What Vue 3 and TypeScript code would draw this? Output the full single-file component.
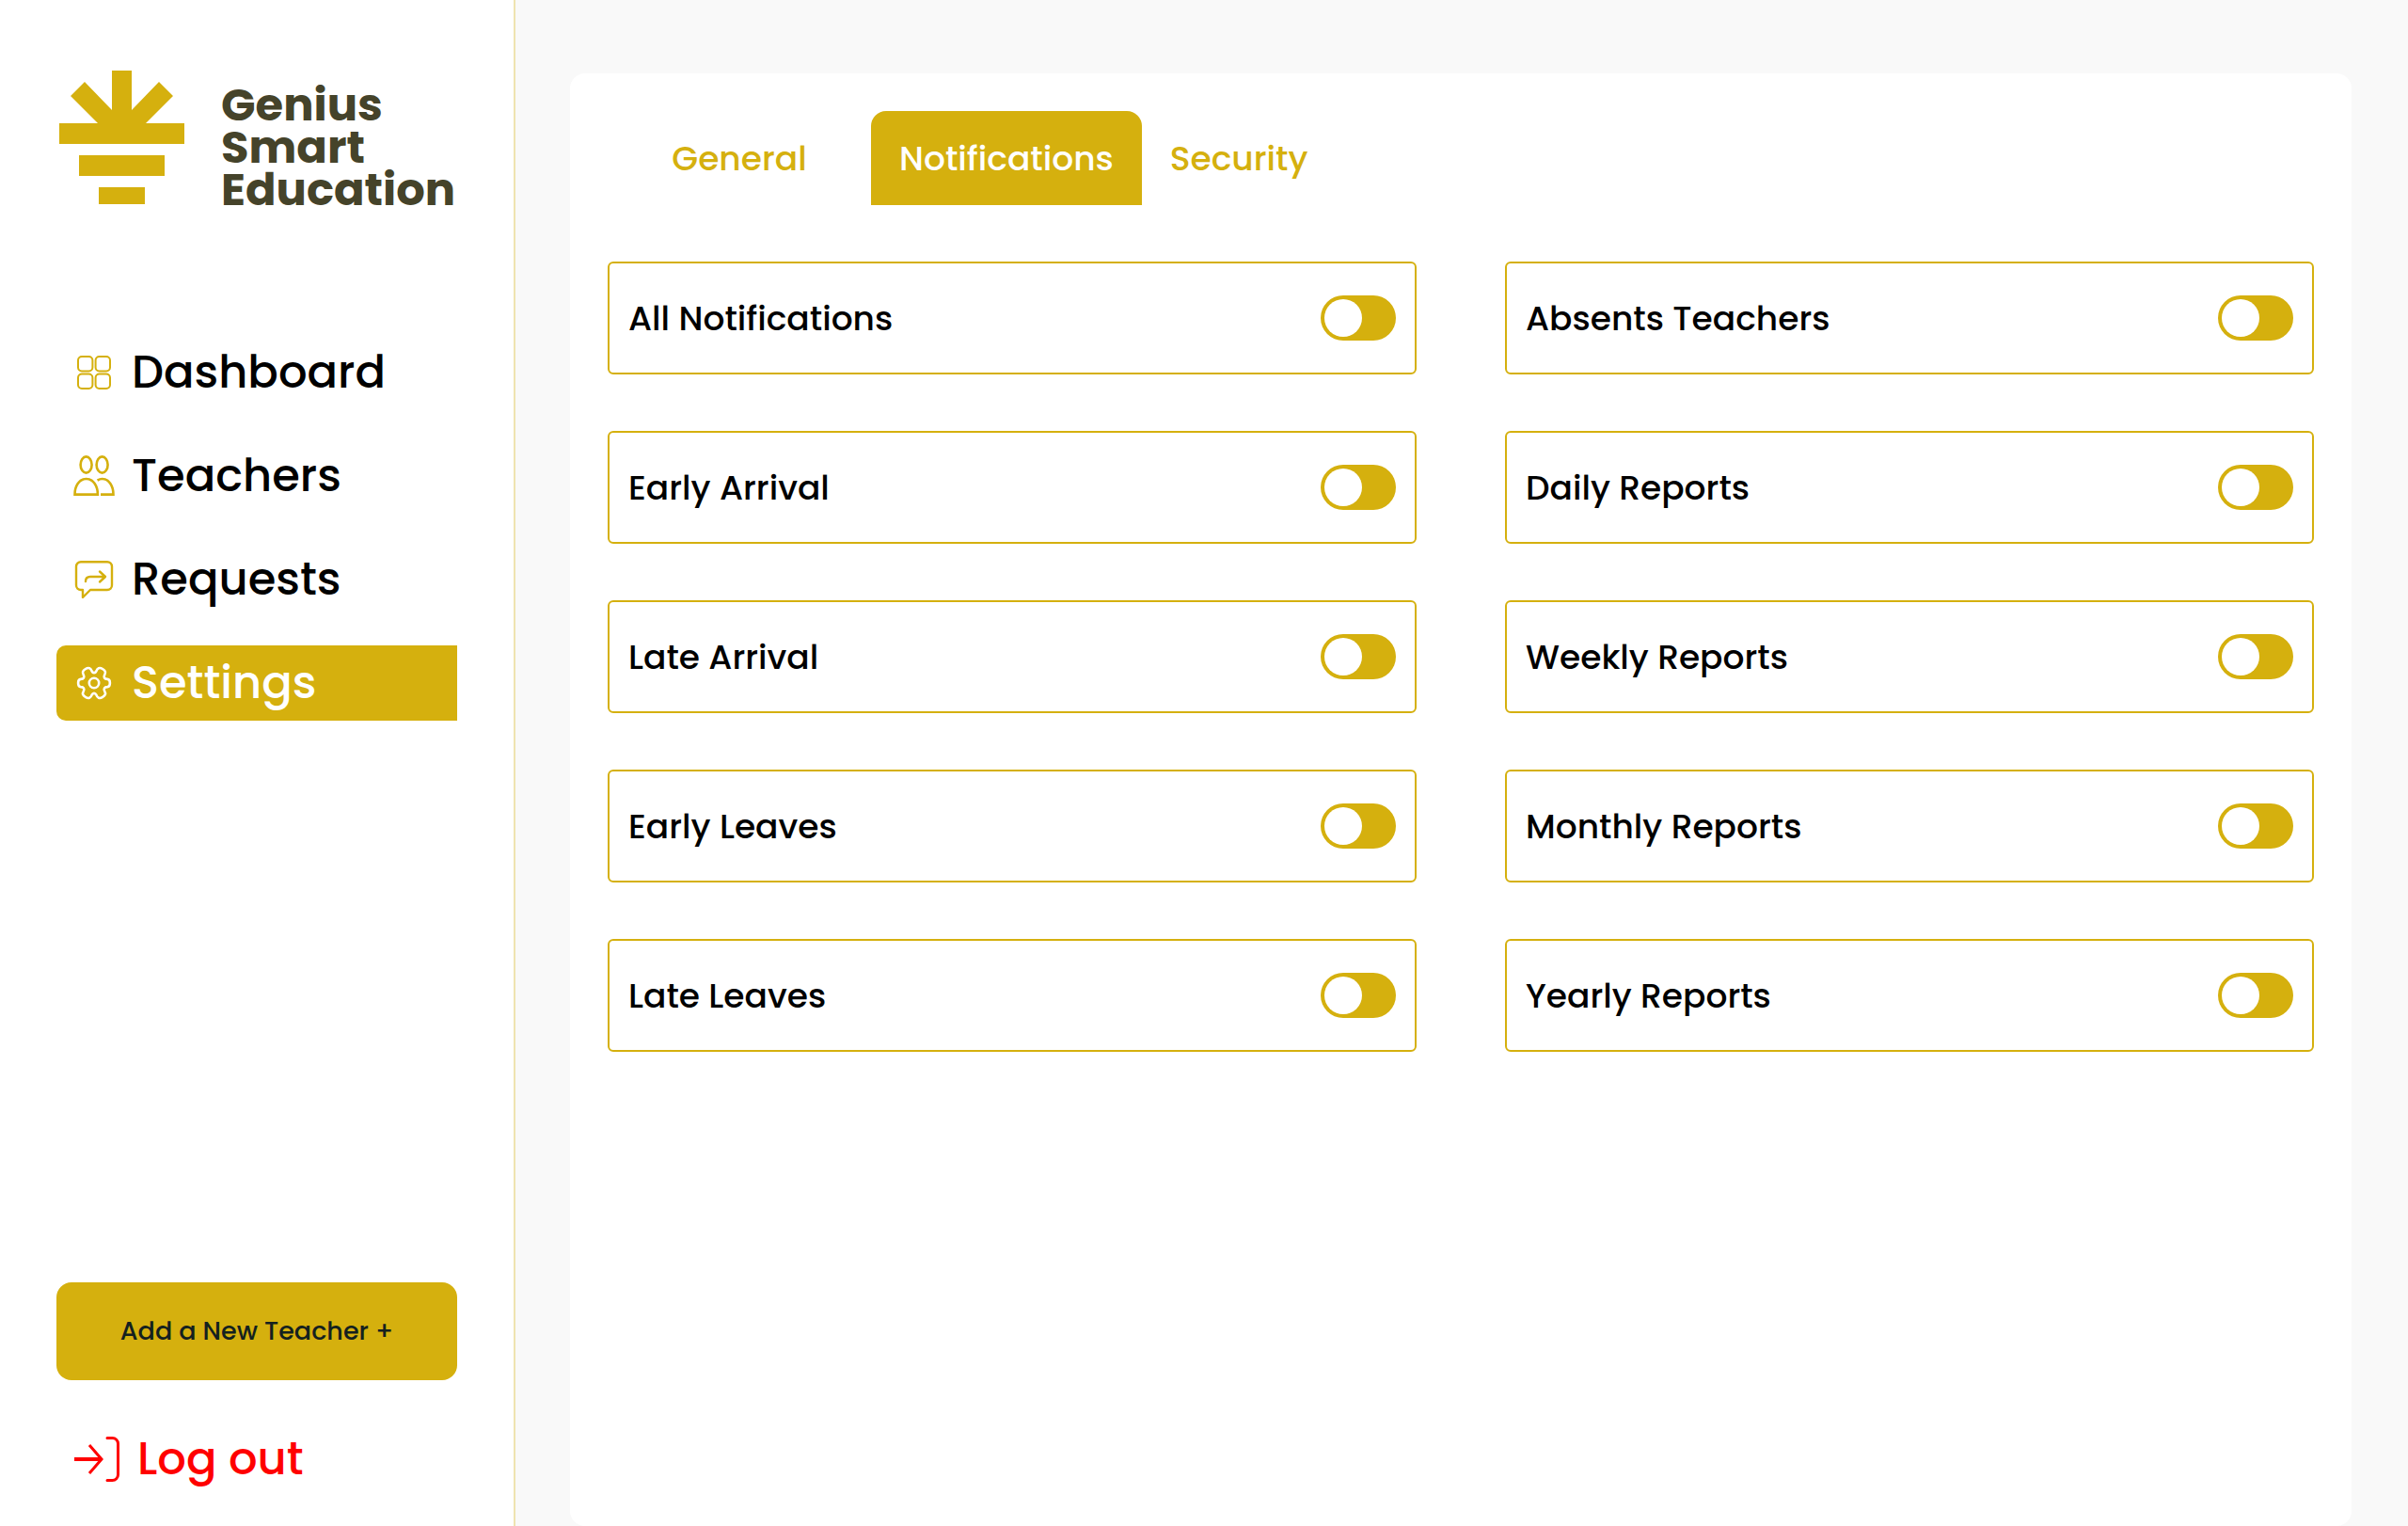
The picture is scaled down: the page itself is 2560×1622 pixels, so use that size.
<script setup lang="ts">
import { ref } from 'vue'

interface Toggle {
  id: string
  label: string
  on: boolean
}

const navItems = ['Dashboard', 'Teachers', 'Requests', 'Settings']
const activeNav = ref('Settings')

const tabs = ['General', 'Notifications', 'Security']
const activeTab = ref('Notifications')

const toggles = ref<Toggle[]>([
  { id: 'all', label: 'All Notifications', on: false },
  { id: 'absents', label: 'Absents Teachers', on: false },
  { id: 'early-arrival', label: 'Early Arrival', on: false },
  { id: 'daily', label: 'Daily Reports', on: false },
  { id: 'late-arrival', label: 'Late Arrival', on: false },
  { id: 'weekly', label: 'Weekly Reports', on: false },
  { id: 'early-leaves', label: 'Early Leaves', on: false },
  { id: 'monthly', label: 'Monthly Reports', on: false },
  { id: 'late-leaves', label: 'Late Leaves', on: false },
  { id: 'yearly', label: 'Yearly Reports', on: false },
])
</script>

<template>
  <div class="layout">
    <aside class="sidebar">
      <div class="brand">
        <svg class="brand-mark" width="134" height="144" viewBox="0 0 134 144" fill="currentColor" aria-hidden="true">
          <path d="M56 0h21v42l29-30 15 15-29 29h41v22H0V56h41L12 27l15-15 29 30z" />
          <path d="M21 90h91v22H21zM42 124h49v18H42z" />
        </svg>
        <div class="brand-name">
          <span>Genius</span>
          <span>Smart</span>
          <span>Education</span>
        </div>
      </div>

      <nav class="nav">
        <a
          v-for="item in navItems"
          :key="item"
          href="#"
          class="nav-link"
          :class="{ active: item === activeNav }"
          @click.prevent="activeNav = item"
        >
          <svg class="nav-icon" viewBox="0 0 44 44" fill="none" stroke="currentColor" aria-hidden="true">
            <g v-if="item === 'Dashboard'" stroke-width="2">
              <rect x="5" y="5" width="15.4" height="15.4" rx="4" />
              <rect x="23.6" y="5" width="15.4" height="15.4" rx="4" />
              <rect x="5" y="23.6" width="15.4" height="15.4" rx="4" />
              <rect x="23.6" y="23.6" width="15.4" height="15.4" rx="4" />
            </g>
            <g v-else-if="item === 'Teachers'" stroke-width="2.6">
              <ellipse cx="13.6" cy="10" rx="6" ry="8.6" />
              <ellipse cx="30.6" cy="10" rx="6" ry="8.6" />
              <path d="M1.5 41.6C1.5 33 6 25 13.7 25s12.2 8 12.2 16.6z" />
              <path d="M25.6 26.6c1.5-1 3.2-1.6 5-1.6C38 25 42.5 33 42.5 41.600H29" />
            </g>
            <g v-else-if="item === 'Requests'" stroke-width="2.4" stroke-linejoin="round" stroke-linecap="round">
              <path d="M8 3.200h28a5 5 0 0 1 5 5V28a5 5 0 0 1-5 5H18l-8 8v-8H8a5 5 0 0 1-5-5V8.200a5 5 0 0 1 5-5z" />
              <path d="M13 24c0-3.500 2-5 5-5h15M28 13.500l6 5.500-6 5.500" />
            </g>
            <g v-else stroke-width="2.6" stroke-linejoin="round">
              <circle cx="22" cy="22" r="5.200" />
              <path d="M19.600 9.300c1.200 2.400 3.600 2.400 4.800 0 1-3.100 3.400-4.200 6.400-2.400 3.200 1.800 4 3.800 2.500 6.300-1.500 2.700-.3 4.600 2.900 4.700 1.800.1 2.700 1.400 2.700 4.100s-.9 4-2.700 4.100c-3.200.1-4.400 2-2.900 4.700 1.500 2.500.7 4.500-2.500 6.300-3 1.800-5.400.7-6.400-2.400-1.200-2.400-3.600-2.400-4.800 0-1 3.100-3.400 4.200-6.400 2.400-3.200-1.800-4-3.800-2.500-6.300 1.500-2.700.3-4.600-2.900-4.700-1.800-.1-2.700-1.400-2.700-4.100s.9-4 2.700-4.100c3.200-.1 4.400-2 2.900-4.700-1.500-2.500-.7-4.500 2.500-6.300 3-1.800 5.400-.7 6.400 2.400z" />
            </g>
          </svg>
          <span>{{ item }}</span>
        </a>
      </nav>

      <div class="sidebar-foot">
        <button type="button" class="add-button">Add a New Teacher +</button>
        <button type="button" class="logout">
          <svg width="50" height="48" viewBox="-1 0 50 48" fill="none" stroke="currentColor" aria-hidden="true">
            <path d="M0 24h29" stroke-width="4" />
            <path d="M16 9l13 15-13 15" stroke-width="3" />
            <path d="M35 1.500h5.500a6 6 0 0 1 6 6v33a6 6 0 0 1-6 6H35" stroke-width="3" stroke-linecap="round" />
          </svg>
          <span>Log out</span>
        </button>
      </div>
    </aside>

    <main class="main">
      <section class="panel">
        <div class="tabs" role="tablist">
          <button
            v-for="tab in tabs"
            :key="tab"
            type="button"
            role="tab"
            class="tab"
            :class="{ active: tab === activeTab, wide: tab === 'General' }"
            :aria-selected="tab === activeTab"
            @click="activeTab = tab"
          >
            {{ tab }}
          </button>
        </div>

        <div class="options">
          <label v-for="toggle in toggles" :key="toggle.id" class="option" :for="toggle.id">
            <span>{{ toggle.label }}</span>
            <input :id="toggle.id" v-model="toggle.on" type="checkbox" class="switch" />
          </label>
        </div>
      </section>
    </main>
  </div>
</template>

<style>
body {
  margin: 0;
  background: #f9f9f9;
}
</style>

<style scoped>
.layout {
  --gold: #d5b00e;
  display: flex;
  min-height: 100vh;
  font-family: Poppins, Inter, sans-serif;
  font-weight: 500;
  color: #000;
}

.layout,
.layout * {
  box-sizing: border-box;
}

button {
  margin: 0;
  border: 0;
  background: none;
  font: inherit;
  cursor: pointer;
}

.sidebar {
  display: flex;
  flex: none;
  flex-direction: column;
  width: 548px;
  padding: 75px 60px 38px;
  border-right: 2px solid #efe3b0;
  background: #fff;
}

.brand {
  display: flex;
  gap: 38px;
  padding-left: 3px;
}

.brand-mark {
  flex: none;
  color: var(--gold);
}

.brand-name {
  display: flex;
  flex-direction: column;
  padding-top: 14px;
  color: #45432a;
  font-size: 48px;
  font-weight: 700;
  line-height: 45px;
}

.nav {
  display: flex;
  flex-direction: column;
  gap: 30px;
  margin-top: 132px;
}

.nav-link {
  display: flex;
  align-items: center;
  gap: 18px;
  height: 80px;
  padding-left: 18px;
  border-radius: 10px 0 0 10px;
  color: #000;
  font-size: 48px;
  text-decoration: none;
}

.nav-icon {
  flex: none;
  width: 44px;
  height: 44px;
  color: var(--gold);
}

.nav-link.active {
  background: var(--gold);
  color: #fff;
}

.nav-link.active .nav-icon {
  color: #fff;
}

.sidebar-foot {
  display: flex;
  flex-direction: column;
  gap: 50px;
  margin-top: auto;
}

.add-button {
  height: 104px;
  border-radius: 16px;
  background: var(--gold);
  color: #14211f;
  font-size: 27px;
}

.logout {
  display: flex;
  align-items: center;
  gap: 18px;
  height: 67px;
  padding: 0 18px;
  color: #f00;
  font-size: 48px;
}

.main {
  display: flex;
  flex: 1;
  min-width: 0;
  padding: 78px 60px 0 58px;
}

.panel {
  flex: 1;
  padding: 40px;
  border-radius: 16px;
  background: #fff;
}

.tabs {
  display: flex;
}

.tab {
  height: 100px;
  padding: 0 30px;
  border-radius: 16px 16px 0 0;
  color: var(--gold);
  font-size: 36px;
}

.tab.wide {
  width: 280px;
}

.tab.active {
  background: var(--gold);
  color: #fff;
}

.options {
  display: grid;
  grid-template-columns: 1fr 1fr;
  gap: 60px 94px;
  margin-top: 60px;
}

.option {
  display: flex;
  align-items: center;
  justify-content: space-between;
  height: 120px;
  padding: 0 20px;
  border: 2px solid var(--gold);
  border-radius: 6px;
  font-size: 36px;
  cursor: pointer;
}

.switch {
  flex: none;
  appearance: none;
  width: 80px;
  height: 48px;
  margin: 0;
  padding: 4px;
  border-radius: 24px;
  background: var(--gold);
  cursor: pointer;
}

.switch::before {
  content: '';
  display: block;
  width: 40px;
  height: 40px;
  border-radius: 50%;
  background: #fff;
}

.switch:checked::before {
  margin-left: auto;
}
</style>
